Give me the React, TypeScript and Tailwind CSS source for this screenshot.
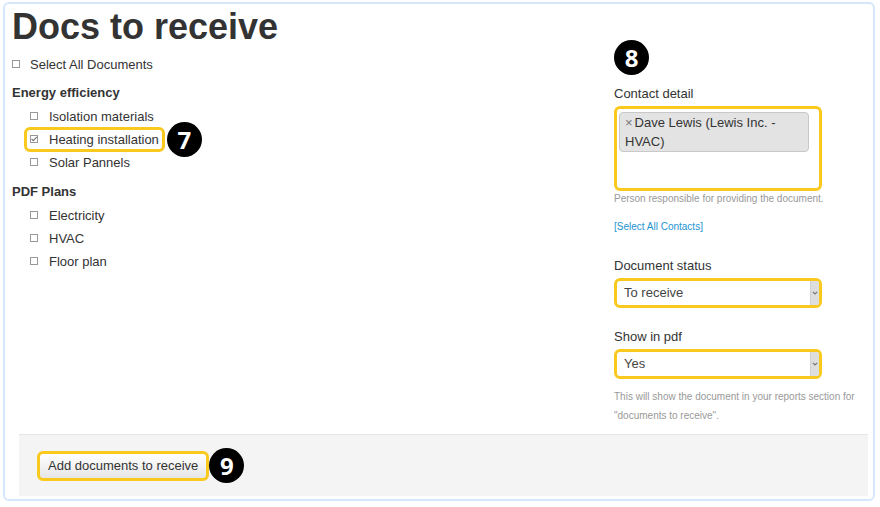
import { useState } from "react";
import type { ReactNode } from "react";
import cn from "clsx";

const groups = [
  {
    title: "Energy efficiency",
    docs: ["Isolation materials", "Heating installation", "Solar Pannels"],
  },
  {
    title: "PDF Plans",
    docs: ["Electricity", "HVAC", "Floor plan"],
  },
];

const allDocs = groups.flatMap((group) => group.docs);

const Badge = ({ children, className }: { children: ReactNode; className?: string }) => (
  <span
    className={cn(
      "flex size-[35px] items-center justify-center rounded-full bg-black font-['Noto_Sans',sans-serif] text-2xl leading-8 font-bold text-white",
      className
    )}
  >
    {children}
  </span>
);

type CheckProps = {
  id: string;
  label: string;
  checked: boolean;
  onChange: () => void;
};

const Check = ({ id, label, checked, onChange }: CheckProps) => (
  <>
    <span className="relative mb-0.5 flex size-2">
      <input
        type="checkbox"
        id={id}
        checked={checked}
        onChange={onChange}
        className="size-2 appearance-none border border-[#999] bg-white"
      />
      {checked && (
        <svg
          viewBox="0 0 8 8"
          className="pointer-events-none absolute inset-0 size-2"
          fill="none"
          stroke="#777"
          strokeWidth="1.1"
        >
          <path d="M1.6 4l1.7 1.7L6.8 1.8" />
        </svg>
      )}
    </span>
    <label htmlFor={id}>{label}</label>
  </>
);

type SelectProps = {
  id: string;
  label: string;
  options: string[];
};

const Select = ({ id, label, options }: SelectProps) => (
  <div>
    <label htmlFor={id} className="block pt-px leading-6">
      {label}
    </label>
    <div className="relative w-52">
      <select
        id={id}
        className="block h-[30px] w-full appearance-none rounded-md border-3 border-[#f9c91e] bg-white px-[7px] text-[#444]"
      >
        {options.map((option) => (
          <option key={option}>{option}</option>
        ))}
      </select>
      <span className="pointer-events-none absolute inset-y-[3px] right-[3px] flex w-[9px] items-center justify-center rounded-r-xs border-l border-[#cfcfcf] bg-[#dedede]">
        <svg
          viewBox="0 0 6 4"
          className="h-1 w-1.5"
          fill="none"
          stroke="#777"
          strokeWidth="1.2"
        >
          <path d="M.8 .8L3 3 5.2 .8" />
        </svg>
      </span>
    </div>
  </div>
);

const App = () => {
  const [selected, setSelected] = useState(["Heating installation"]);
  const [contacts, setContacts] = useState(["Dave Lewis (Lewis Inc. - HVAC)"]);

  const toggle = (doc: string) =>
    setSelected((prev) =>
      prev.includes(doc) ? prev.filter((item) => item !== doc) : [...prev, doc]
    );

  const allSelected = selected.length === allDocs.length;

  return (
    <main className="bg-white px-[3px] pt-0.5 pb-1.5 font-['Liberation_Sans',Arial,sans-serif] text-[13px] text-[#333]">
      <form
        onSubmit={(e) => e.preventDefault()}
        className="mr-0.5 rounded-md border-2 border-[#d6e7fc] pb-[3px]"
      >
        <div className="flex items-start justify-between gap-6 pr-[5px] pl-[7px]">
          <div>
            <h1 className="text-4xl leading-[46px] font-bold">
              Docs to receive
            </h1>
            <div className="mt-[3px] flex h-6 items-center gap-2.5">
              <Check
                id="all"
                label="Select All Documents"
                checked={allSelected}
                onChange={() => setSelected(allSelected ? [] : allDocs)}
              />
            </div>
            <div className="mt-1 flex flex-col items-start gap-1.5">
              {groups.map((group) => (
                <section key={group.title}>
                  <h2 className="leading-6 font-bold">{group.title}</h2>
                  <ul>
                    {group.docs.map((doc) => (
                      <li
                        key={doc}
                        className="relative ml-[18px] flex h-[23px] items-center gap-[11px]"
                      >
                        <Check
                          id={doc}
                          label={doc}
                          checked={selected.includes(doc)}
                          onChange={() => toggle(doc)}
                        />
                        {doc === "Heating installation" && (
                          <>
                            <span className="pointer-events-none absolute -inset-x-1.5 -inset-y-px rounded-md border-3 border-[#f9c91e]" />
                            <Badge className="absolute -right-2 translate-x-full">
                              7
                            </Badge>
                          </>
                        )}
                      </li>
                    ))}
                  </ul>
                </section>
              ))}
            </div>
          </div>

          <div className="w-[254px] shrink-0 pt-9">
            <Badge>8</Badge>
            <label htmlFor="contact" className="mt-[7px] block leading-6">
              Contact detail
            </label>
            <div className="flex h-[85px] w-52 flex-col rounded-md border-3 border-[#f9c91e] bg-white p-0.5 pt-[3px]">
              {contacts.map((contact) => (
                <div
                  key={contact}
                  className="mr-2 rounded-sm border border-[#c8c8c8] bg-[#e3e3e3] px-[5px] leading-[19px]"
                >
                  <button
                    type="button"
                    aria-label="Remove contact"
                    onClick={() => setContacts([])}
                    className="mr-0.5 text-[#777]"
                  >
                    ×
                  </button>
                  {contact}
                </div>
              ))}
              <input
                id="contact"
                type="text"
                className="w-full min-w-0 flex-1 outline-none"
              />
            </div>
            <p className="text-[10px] leading-4 text-[#999]">
              Person responsible for providing the document.
            </p>
            <a
              href="#contacts"
              className="mt-3 block text-[10px] leading-4 text-[#1c94d2]"
            >
              [Select All Contacts]
            </a>
            <div className="mt-[18px] flex flex-col gap-4">
              <Select
                id="status"
                label="Document status"
                options={["To receive", "Received"]}
              />
              <Select id="pdf" label="Show in pdf" options={["Yes", "No"]} />
            </div>
            <p className="mt-2 text-[10px] leading-[19px] text-[#999]">
              This will show the document in your reports section for "documents
              to receive".
            </p>
          </div>
        </div>

        <div className="mt-[9px] mr-[5px] ml-3.5 flex items-center border-t border-[#e6e6e6] bg-[#f4f4f4] px-[18px] py-[13px]">
          <button
            type="submit"
            className="h-[30px] rounded-md border-3 border-[#f9c91e] bg-linear-to-b from-white to-[#e6e6e6] px-2"
          >
            Add documents to receive
          </button>
          <Badge>9</Badge>
        </div>
      </form>
    </main>
  );
};

export default App;
